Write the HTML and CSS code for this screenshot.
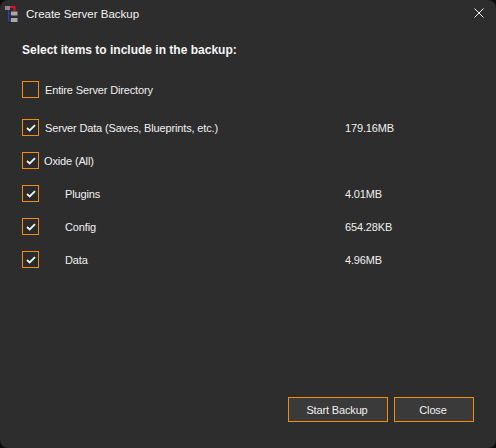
FILE: index.html
```html
<!DOCTYPE html>
<html lang="en">
<head>
<meta charset="utf-8">
<title>Create Server Backup</title>
<link rel="stylesheet" href="styles.css">
</head>
<body>
<div class="window">
  <header class="titlebar">
    <svg class="app-icon" width="13" height="16" viewBox="0 0 13 16">
      <rect x="0" y="0" width="5" height="4" fill="#8a8a8a"/>
      <path d="M5 1H9.5V5" fill="none" stroke="#e0102a" stroke-width="2"/>
      <path d="M3.5 4V14.5H7M3.5 7.5H7" fill="none" stroke="#2b3fd8" stroke-width="1"/>
      <rect x="6" y="5.5" width="6.5" height="4" fill="#a8a8a8"/>
      <rect x="6" y="12" width="6.5" height="4" fill="#a8a8a8"/>
    </svg>
    <span class="title">Create Server Backup</span>
    <svg class="close-x" width="10" height="10" viewBox="0 0 10 10">
      <path d="M0.5 0.5L9.5 9.5M9.5 0.5L0.5 9.5" stroke="#f0f0f0" stroke-width="1" fill="none"/>
    </svg>
  </header>
  <main class="content">
    <h1 class="heading">Select items to include in the backup:</h1>
    <div class="items">
      <div class="row row-first"><span class="box"></span><span class="label">Entire Server Directory</span></div>
      <div class="row"><span class="box"><svg class="check" viewBox="0 0 11 9"><path d="M1 4.5L4 7.2L10 1.2" /></svg></span><span class="label">Server Data (Saves, Blueprints, etc.)</span><span class="size">179.16MB</span></div>
      <div class="row"><span class="box"><svg class="check" viewBox="0 0 11 9"><path d="M1 4.5L4 7.2L10 1.2" /></svg></span><span class="label tight">Oxide (All)</span></div>
      <div class="row"><span class="box"><svg class="check" viewBox="0 0 11 9"><path d="M1 4.5L4 7.2L10 1.2" /></svg></span><span class="label sub">Plugins</span><span class="size">4.01MB</span></div>
      <div class="row"><span class="box"><svg class="check" viewBox="0 0 11 9"><path d="M1 4.5L4 7.2L10 1.2" /></svg></span><span class="label sub">Config</span><span class="size">654.28KB</span></div>
      <div class="row"><span class="box"><svg class="check" viewBox="0 0 11 9"><path d="M1 4.5L4 7.2L10 1.2" /></svg></span><span class="label sub">Data</span><span class="size">4.96MB</span></div>
    </div>
    <footer class="actions">
      <button class="btn btn-start">Start Backup</button>
      <button class="btn btn-close">Close</button>
    </footer>
  </main>
</div>
</body>
</html>
```
FILE: styles.css
```css
html, body {
  margin: 0;
  padding: 0;
  background: #0c0c0c;
}
.window {
  width: 496px;
  height: 448px;
  background: #2d2d2d;
  border-radius: 8px;
  display: flex;
  flex-direction: column;
  overflow: hidden;
  color: #f0f0f0;
  font-family: "Liberation Sans", Arial, sans-serif;
  font-size: 11px;
  letter-spacing: -0.15px;
}
.titlebar {
  height: 30px;
  flex: none;
  display: flex;
  align-items: center;
  padding: 0 12px 0 5px;
}
.app-icon {
  flex: none;
  margin-top: -3px;
}
.title {
  margin-left: 8px;
  font-size: 11.5px;
  letter-spacing: 0;
  flex: 1;
  margin-top: -3px;
  color: #f2f2f2;
}
.close-x {
  flex: none;
  margin-top: -5px;
}
.content {
  flex: 1;
  display: flex;
  flex-direction: column;
  padding: 0 22px 26px;
}
.heading {
  margin: 13px 0 0;
  font-size: 12px;
  font-weight: bold;
  line-height: 14px;
  letter-spacing: 0;
  color: #f4f4f4;
}
.items {
  margin-top: 24px;
  display: flex;
  flex-direction: column;
}
.row {
  height: 17px;
  display: flex;
  align-items: center;
  margin-top: 16px;
}
.row-first {
  margin-top: 0;
  margin-bottom: 5px;
}
.box {
  width: 15px;
  height: 15px;
  border: 1px solid #f28c13;
  flex: none;
  display: flex;
  align-items: center;
  justify-content: center;
  background: #2b2b2b;
}
.check {
  width: 10px;
  height: 8px;
  fill: none;
  stroke: #f0f0f0;
  stroke-width: 2.2;
}
.label {
  margin-left: 6px;
  width: 300px;
  flex: none;
}
.tight {
  margin-left: 5px;
  width: 301px;
}
.sub {
  padding-left: 20px;
  width: 280px;
}
.actions {
  margin-top: auto;
  display: flex;
  justify-content: flex-end;
  gap: 6px;
  height: 25px;
}
.btn {
  height: 25px;
  background: #3a3a3a;
  border: 1px solid #f28c13;
  color: #f0f0f0;
  font: inherit;
  letter-spacing: inherit;
  padding: 0 2px 0 0;
}
.btn-start { width: 100px; }
.btn-close { width: 80px; }
```
